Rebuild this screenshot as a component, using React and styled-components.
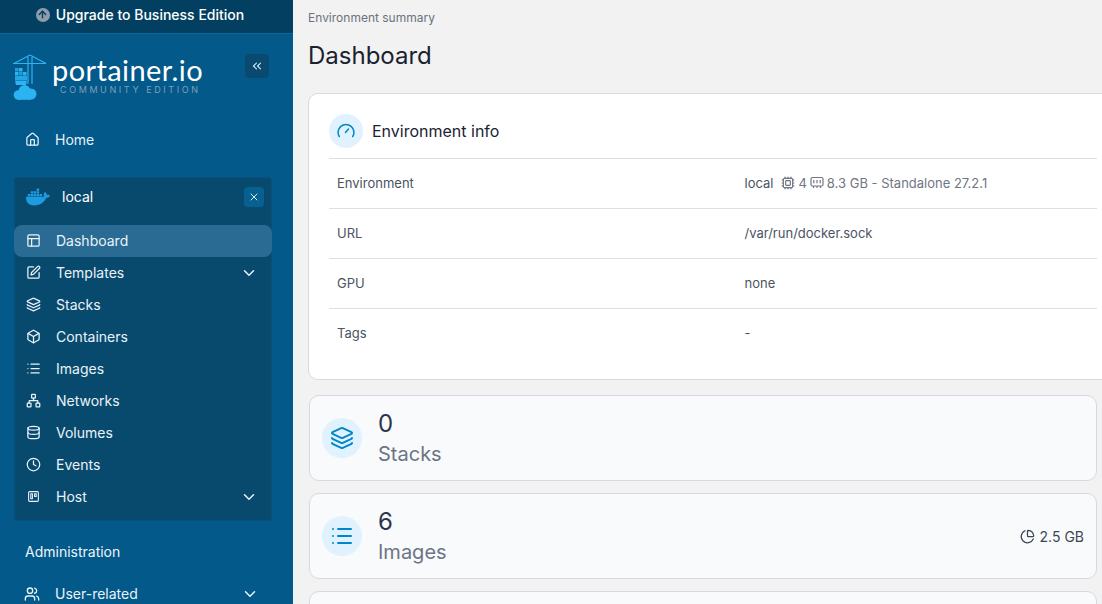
import React from 'react';
import styled, { createGlobalStyle } from 'styled-components';
import { Home, PanelsTopLeft, SquarePen, Layers, Box, List, Network, Database, Clock, Users, ChevronDown, ChevronsLeft, X, Cpu, ChartPie, ArrowUp } from 'lucide-react';
import { FiTrello } from 'react-icons/fi';
import { FaDocker } from 'react-icons/fa';

const Global = createGlobalStyle`
  html, body { margin: 0; height: 100%; overflow: hidden; }
  body { font-family: Inter, "Liberation Sans", sans-serif; background: #f2f2f2; }
  * { box-sizing: border-box; }
`;
const Page = styled.div`display: flex; width: 1102px; height: 604px; overflow: hidden;`;
const Sidebar = styled.aside`width: 293px; flex: none; height: 604px; overflow: hidden; background: #02598a; color: #f2f7fb;`;
const Upgrade = styled.div`
  height: 34px; background: #023f60; border-bottom: 1px solid #0a6a9e;
  display: flex; align-items: center; justify-content: center; gap: 6px;
  font-size: 14px; font-weight: 500; color: #fff; padding: 0 13px 4px 0;
`;
const UpIcon = styled.span`
  width: 14px; height: 14px; border-radius: 50%; background: #8e9cab; color: #023f60;
  display: inline-flex; align-items: center; justify-content: center;
`;
const Brand = styled.div`display: flex; padding: 20px 24px 0 13px; height: 72px; justify-content: space-between;`;
const LogoWrap = styled.div`display: flex; gap: 5px;`;
const LogoText = styled.div`display: flex; flex-direction: column; align-items: flex-start; padding-top: 1px;`;
const LogoName = styled.div`font-family: Lato, Inter, sans-serif; font-size: 29px; line-height: 29px; color: #fff; letter-spacing: 0.4px; font-weight: 400;`;
const LogoSub = styled.div`font-size: 9px; line-height: 9px; letter-spacing: 2.6px; color: #7f9fb8; margin: 1px 0 0 8px; white-space: nowrap;`;
const Collapse = styled.div`
  width: 24px; height: 24px; border-radius: 4px; background: #0a4a70; color: #d5e3ec;
  display: flex; align-items: center; justify-content: center;
`;
const HomeRow = styled.div`display: flex; align-items: center; height: 32px; margin-top: 17px; padding-left: 25px; gap: 15px; font-size: 14px; color: #e6f1f8; font-weight: 400;`;
const EnvPanel = styled.div`
  margin: 22px 21px 0 14px; height: 344px; background: #084a6e; border-radius: 4px;
  border: 1px dotted #07588a;
`;
const EnvHead = styled.div`display: flex; align-items: center; height: 47px; padding: 0 7px 10px 11px; font-size: 14px; color: #fff; font-weight: 400;`;
const EnvName = styled.span`margin-left: 12px; flex: 1;`;
const EnvClose = styled.div`width: 20px; height: 20px; border-radius: 4px; background: #07608f; color: #dbe8f0; display: flex; align-items: center; justify-content: center;`;
const EnvRows = styled.nav`margin: 0 -1px;`;
const Row = styled.div`
  display: flex; align-items: center; height: 32px; padding: 0 14px 1px ${p => p.$inset}px; border-radius: 8px;
  font-size: 14px; font-weight: 400; color: #e9f3f9; gap: 15px;
  background: ${p => (p.$active ? '#2a6b94' : 'transparent')};
`;
const RowLabel = styled.span`flex: 1;`;
const AdminTitle = styled.div`font-size: 14px; font-weight: 400; color: #eef5fa; padding: 22px 0 0 25px; height: 57px;`;

const Main = styled.main`flex: 1; min-width: 0; padding: 10px 5px 0 15px;`;
const Crumb = styled.div`font-size: 12px; line-height: 15px; color: #6b7280;`;
const Title = styled.h1`margin: 16px 0 0; font-size: 24px; line-height: 30px; font-weight: 400; color: #1a2230; height: 52px;`;
const InfoCard = styled.section`
  width: 810px; height: 287px; background: #fff; border: 1px solid #d7dae1; border-radius: 10px; padding: 0 20px;
`;
const InfoHead = styled.div`display: flex; align-items: center; gap: 9px; height: 65px; padding-top: 9px; border-bottom: 1px solid #dcdfe4; font-size: 16px; font-weight: 430; color: #1a2433;`;
const Badge = styled.span`
  width: ${p => p.$size}px; height: ${p => p.$size}px; border-radius: 50%; background: #e0f2fe; color: #0086c9; flex: none;
  display: flex; align-items: center; justify-content: center;
`;
const InfoRow = styled.div`
  display: flex; align-items: center; height: 50px; padding: 0 0 2px 8px; font-size: 13px; color: #4b5462;
  border-bottom: 1px solid ${p => (p.$last ? 'transparent' : '#dcdfe4')};
`;
const InfoKey = styled.div`width: 407.5px;`;
const InfoValue = styled.div`display: flex; align-items: center; gap: 3px; color: #4b5462;`;
const Muted = styled.span`color: #6f7682; display: inline-flex; align-items: center; gap: 3px; margin-left: ${p => p.$gap || 0}px;`;
const Widget = styled.section`
  display: flex; align-items: center; height: 86px; margin: ${p => p.$top}px 0 0 1px; padding: 0 12px 0 12px;
  background: #f9fafc; border: 1px solid #d6d9e2; border-radius: 10px; gap: 16px;
`;
const WidgetText = styled.div`flex: 1; display: flex; flex-direction: column; padding-top: 1px;`;
const Count = styled.div`font-size: 24px; line-height: 30px; color: #2c3648;`;
const Label = styled.div`font-size: 20px; line-height: 30px; color: #6b7484;`;
const Extra = styled.div`display: flex; align-items: center; gap: 5px; font-size: 14px; color: #3d4654;`;

const Logo = () => (
  <svg width="34" height="46" viewBox="0 0 34 46" fill="none">
    <g stroke="#2bb3f2" strokeWidth="1.2">
      <path d="M0 9.500h33M17 1L1 9.500M17 1l16 8.500M15 3v27M19 3v27" />
    </g>
    <g fill="#2bb3f2">
      <rect x="2" y="14" width="3.500" height="3.500" opacity=".75" /><rect x="6" y="14" width="3.500" height="3.500" />
      <rect x="2" y="18" width="3.500" height="3.500" /><rect x="6" y="18" width="3.500" height="3.500" opacity=".75" /><rect x="10" y="18" width="3.500" height="3.500" />
      <rect x="2" y="22" width="12" height="4" opacity=".85" />
      <path d="M2 26.500h12l-1 4.500H3z" />
      <circle cx="5.500" cy="41" r="4.800" />
      <circle cx="11.500" cy="37" r="6" />
      <circle cx="18" cy="40" r="5.500" />
      <rect x="5" y="40" width="13" height="5.800" />
    </g>
  </svg>
);

const Gauge = () => (
  <svg width="18" height="18" viewBox="0 0 18 18" fill="none" stroke="currentColor" strokeWidth="1.5" strokeLinecap="round">
    <path d="M2.300 14.500A7.900 7.900 0 1 1 15.700 14.500" />
    <path d="M8.500 10.500L11.500 7" />
  </svg>
);

const Memory = () => (
  <svg width="14" height="14" viewBox="0 0 14 14" fill="none" stroke="currentColor" strokeWidth="1.200">
    <rect x="1" y="1.500" width="12" height="8.500" rx="1.500" />
    <path d="M3.800 4v3.200M7 4v3.200M10.200 4v3.200M3.500 10v2M7 10v2M10.500 10v2" />
  </svg>
);

const items = [
  [PanelsTopLeft, 'Dashboard', true],
  [SquarePen, 'Templates', false, true],
  [Layers, 'Stacks'],
  [Box, 'Containers'],
  [List, 'Images'],
  [Network, 'Networks'],
  [Database, 'Volumes'],
  [Clock, 'Events'],
  [FiTrello, 'Host', false, true],
];
const info = [
  ['URL', '/var/run/docker.sock'],
  ['GPU', 'none'],
  ['Tags', '-'],
];

export default function App() {
  return (
    <Page>
      <Global />
      <Sidebar>
        <Upgrade><UpIcon><ArrowUp size={11} strokeWidth={3} /></UpIcon>Upgrade to Business Edition</Upgrade>
        <Brand>
          <LogoWrap>
            <Logo />
            <LogoText>
              <LogoName>portainer.io</LogoName>
              <LogoSub>COMMUNITY EDITION</LogoSub>
            </LogoText>
          </LogoWrap>
          <Collapse><ChevronsLeft size={14} /></Collapse>
        </Brand>
        <HomeRow><Home size={15} />Home</HomeRow>
        <EnvPanel>
          <EnvHead>
            <FaDocker size={24} color="#1d9be0" />
            <EnvName>local</EnvName>
            <EnvClose><X size={12} /></EnvClose>
          </EnvHead>
          <EnvRows>
            {items.map(([Icon, name, active, more]) => (
              <Row key={name} $inset={12} $active={active}>
                <Icon size={name === 'Host' ? 13 : 15} style={name === 'Host' ? { margin: '0 1px' } : undefined} />
                <RowLabel>{name}</RowLabel>
                {more && <ChevronDown size={18} />}
              </Row>
            ))}
          </EnvRows>
        </EnvPanel>
        <AdminTitle>Administration</AdminTitle>
        <Row $inset={24}><Users size={16} /><RowLabel>User-related</RowLabel><ChevronDown size={18} style={{ marginRight: 20 }} /></Row>
      </Sidebar>
      <Main>
        <Crumb>Environment summary</Crumb>
        <Title>Dashboard</Title>
        <InfoCard>
          <InfoHead><Badge $size={34}><Gauge /></Badge>Environment info</InfoHead>
          <InfoRow>
            <InfoKey>Environment</InfoKey>
            <InfoValue>
              local
              <Muted $gap={5}><Cpu size={14} />4<Memory />8.3 GB - Standalone 27.2.1</Muted>
            </InfoValue>
          </InfoRow>
          {info.map(([k, v], i) => (
            <InfoRow key={k} $last={i === 2}><InfoKey>{k}</InfoKey><InfoValue>{v}</InfoValue></InfoRow>
          ))}
        </InfoCard>
        <Widget $top={15}>
          <Badge $size={40}><Layers size={24} /></Badge>
          <WidgetText><Count>0</Count><Label>Stacks</Label></WidgetText>
        </Widget>
        <Widget $top={12}>
          <Badge $size={40}><List size={24} /></Badge>
          <WidgetText><Count>6</Count><Label>Images</Label></WidgetText>
          <Extra><ChartPie size={15} />2.5 GB</Extra>
        </Widget>
        <Widget $top={12} />
      </Main>
    </Page>
  );
}
